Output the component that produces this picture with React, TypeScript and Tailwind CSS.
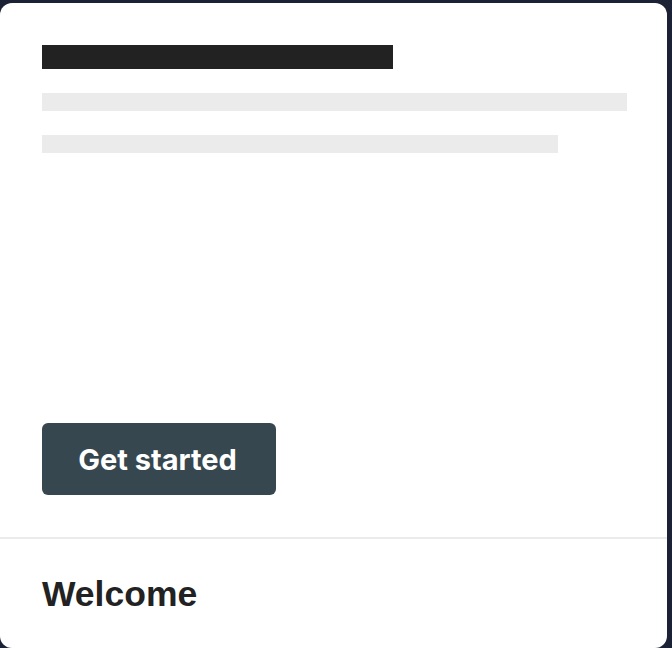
import React from 'react';

export default function App() {
  return (
    <div className="min-h-[648px] w-[672px] bg-[#1b2236] pt-[3px] pr-[5px]">
      <div className="flex h-[645px] flex-col overflow-hidden rounded-[12px] bg-white">
        <div className="flex flex-1 flex-col px-[42px] pt-[42px]">
          <div className="h-[24px] w-[351px] bg-[#222222]" />
          <div className="mt-[24px] h-[18px] w-[585px] bg-[#ebebeb]" />
          <div className="mt-[24px] h-[18px] w-[516px] bg-[#ebebeb]" />
          <button className="mt-[270px] flex h-[72px] w-[234px] items-center justify-center rounded-[6px] bg-[#37474f] pr-[3px] pt-[2px] font-['Inter',sans-serif] text-[29px] font-bold text-white">
            Get started
          </button>
        </div>
        <div className="h-[111px] border-t-[2px] border-[#ebebeb] px-[42px] pt-[35px]">
          <h2 className="font-['Liberation_Sans',Arial,sans-serif] text-[35.5px] leading-[40px] font-bold text-[#222222]">
            Welcome
          </h2>
        </div>
      </div>
    </div>
  );
}
